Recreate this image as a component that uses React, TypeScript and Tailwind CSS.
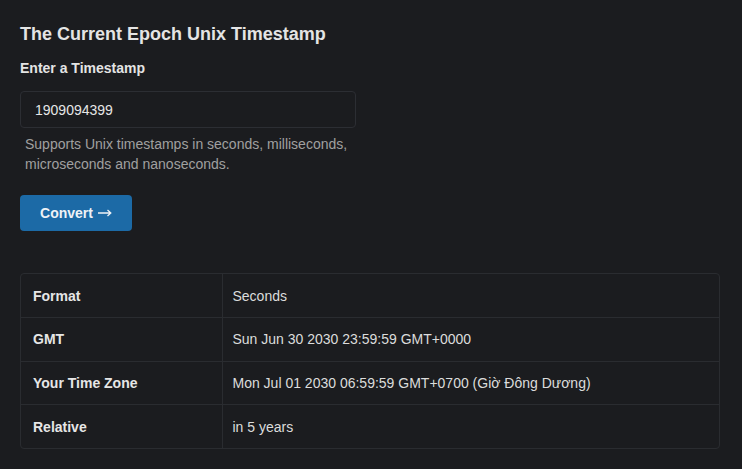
export default function App() {
  const rows = [
    ['Format', 'Seconds'],
    ['GMT', 'Sun Jun 30 2030 23:59:59 GMT+0000'],
    ['Your Time Zone', 'Mon Jul 01 2030 06:59:59 GMT+0700 (Giờ Đông Dương)'],
    ['Relative', 'in 5 years'],
  ];

  return (
    <div className="min-h-[469px] bg-[#1b1c1f] px-5 pt-[22px] text-[#e6e6e6] font-['Liberation_Sans',Arial,sans-serif]">
      <h1 className="text-lg font-bold leading-6 text-[#e4e4e4]">The Current Epoch Unix Timestamp</h1>

      <label className="mt-[12px] block text-sm font-bold leading-5 text-[#e4e4e4]">Enter a Timestamp</label>

      <input
        defaultValue="1909094399"
        className="mt-[13px] block h-[37px] w-[336px] rounded border border-[#2c2e33] bg-[#1b1c1f] px-[14px] text-sm text-[#e6e6e6] outline-none"
      />

      <p className="mt-[6px] w-[336px] pl-[5px] text-sm leading-5 text-[#a0a0a0]">
        Supports Unix timestamps in seconds, milliseconds, microseconds and nanoseconds.
      </p>

      <button className="mt-[21px] flex h-[36px] w-[112px] items-center justify-center gap-[5px] rounded bg-[#1c6aa6] text-sm font-bold text-[#eef2f6]">
        Convert
        <svg width="14" height="8" viewBox="0 0 14 8" fill="none" stroke="currentColor" strokeWidth="1.3">
          <path d="M0 4h12.5M9.5 1l3.3 3-3.3 3" />
        </svg>
      </button>

      <div className="mt-[42px] w-[700px] overflow-hidden rounded border border-[#2a2c30]">
        <table className="w-full border-collapse text-sm">
          <tbody>
            {rows.map(([k, v], i) => (
              <tr key={k} className={i > 0 ? 'border-t border-[#2a2c30]' : ''}>
                <td className="h-[43.5px] w-[201px] border-r border-[#2a2c30] px-3 font-bold text-[#e6e6e6]">{k}</td>
                <td className="h-[43.5px] px-[10px] text-[#dcdcdc]">{v}</td>
              </tr>
            ))}
          </tbody>
        </table>
      </div>
    </div>
  );
}
